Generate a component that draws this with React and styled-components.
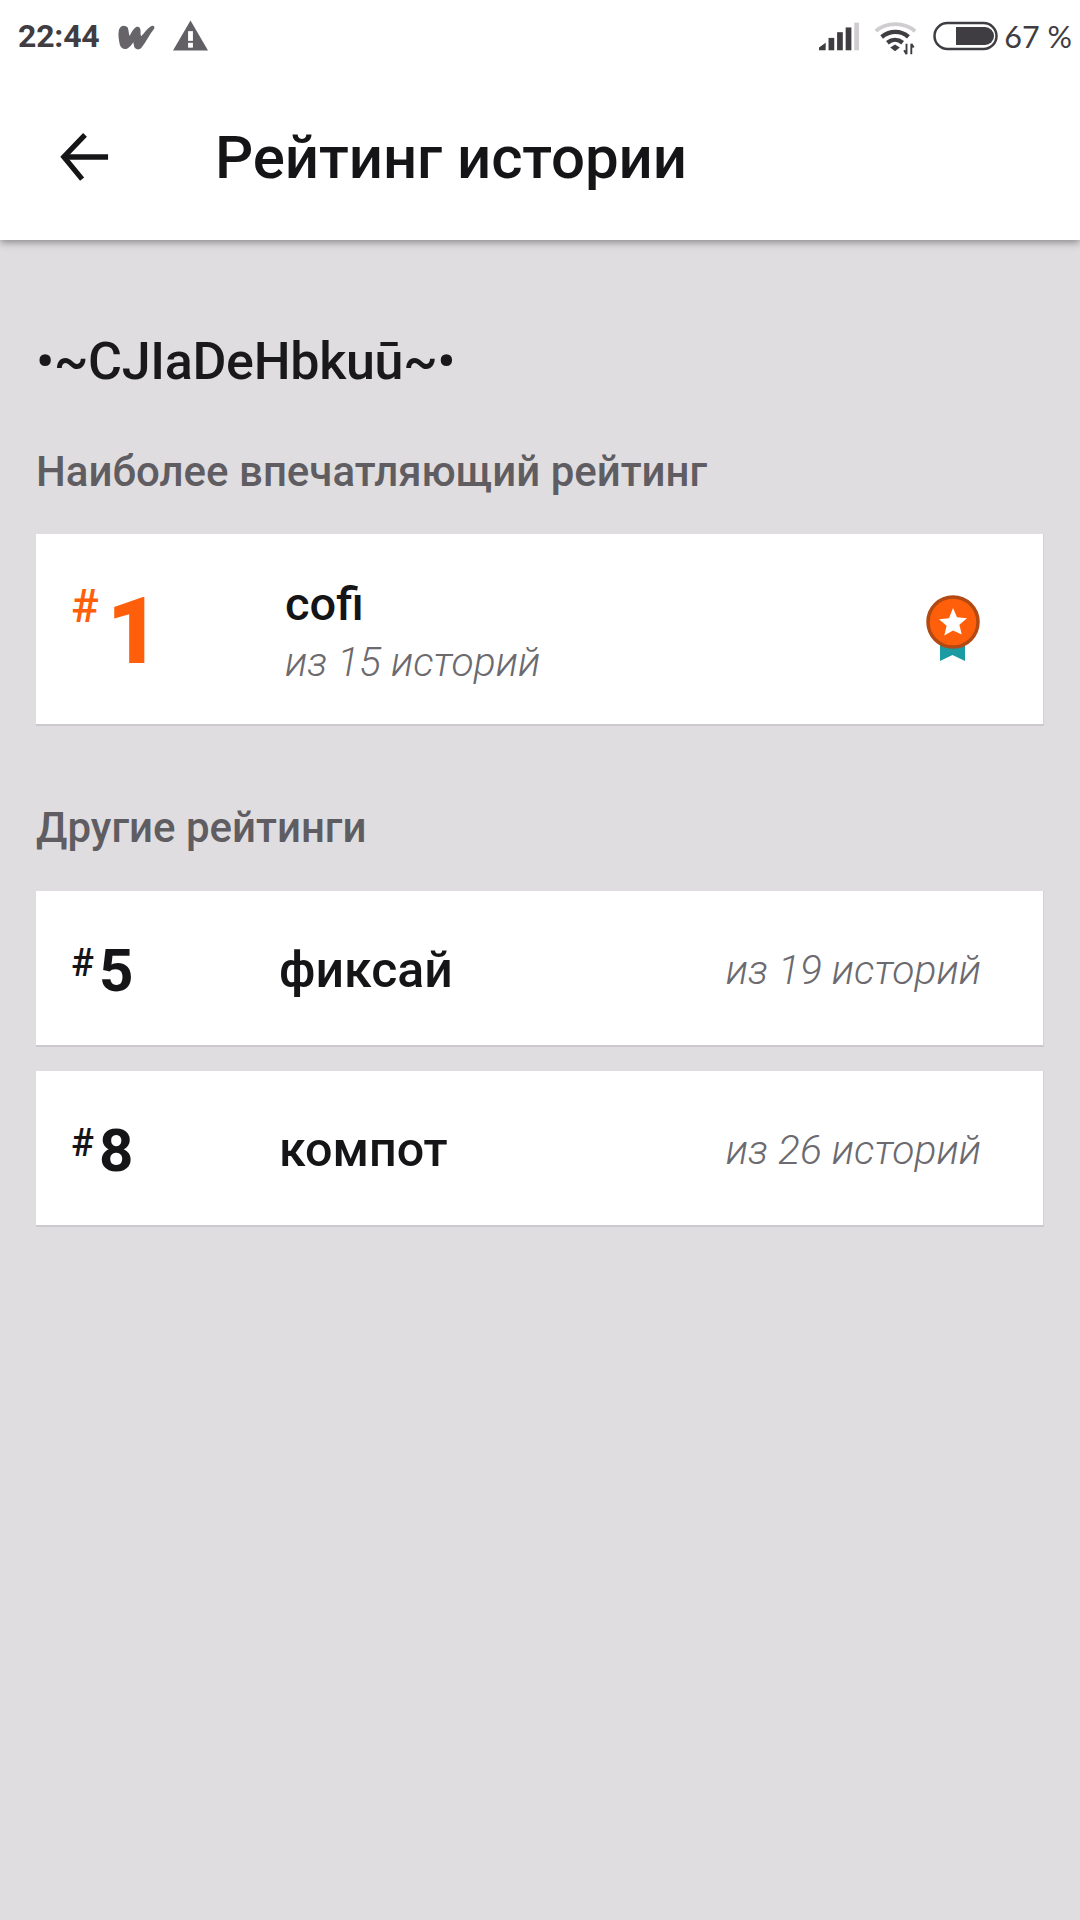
import React from "react";
import styled, { createGlobalStyle } from "styled-components";

const Global = createGlobalStyle`
  html, body { margin: 0; padding: 0; background: #dfdde0; }
  body { font-family: Roboto, "Noto Sans", sans-serif; }
`;
const Page = styled.div`
  width: 1080px; height: 1920px; background: #dfdde0; display: flex; flex-direction: column; overflow: hidden;
`;
const Top = styled.header`
  height: 240px; background: #fff; box-shadow: 0 2px 8px rgba(0,0,0,.42); display: flex; flex-direction: column; flex: none; position: relative;
`;
const StatusBar = styled.div`
  height: 72px; display: flex; align-items: center; justify-content: space-between; padding: 0 8px 0 18px; color: #3f3d41;
`;
const StatusGroup = styled.div`
  display: flex; align-items: center; gap: ${p => p.$gap || 16}px;
`;
const Clock = styled.span`
  font-size: 32px; font-weight: 700; letter-spacing: -0.2px;
`;
const Battery = styled.span`
  font-size: 30.5px; font-weight: 400; font-family: Lato, Roboto, sans-serif; margin-left: -10px;
`;
const AppBar = styled.div`
  flex: 1; display: flex; align-items: center; padding: 2px 0 0 60px; gap: 105px;
`;
const Title = styled.h1`
  margin: 0; font-size: 60px; font-weight: 500; color: #151416; letter-spacing: -0.1px;
`;
const Content = styled.main`
  padding: 0 36px; display: flex; flex-direction: column;
`;
const Name = styled.div`
  font-size: 52px; font-weight: 500; color: #19181a; margin-top: 94px; line-height: 56px; letter-spacing: -0.3px;
`;
const Section = styled.h2`
  margin: ${p => p.$top}px 0 0; font-size: 42px; line-height: 48px; font-weight: 500; color: #5f5d61;
`;
const Card = styled.div`
  background: #fff; border-bottom: 2px solid #cbc9cd; border-right: 1px solid #d2d0d4; margin-top: ${p => p.$top}px; height: ${p => p.$h}px; display: flex; align-items: center; position: relative;
`;
const Rank = styled.div`
  width: ${p => p.$width}px; padding: ${p => p.$pad}px 0 0 35px; box-sizing: border-box; display: flex; align-items: flex-start; color: ${p => p.$color}; flex: none;
`;
const Hash = styled.span`
  font-size: ${p => p.$size}px; font-weight: 500; line-height: 1; margin-right: ${p => p.$gap}px; margin-top: ${p => p.$top}px;
`;
const Num = styled.span`
  font-size: ${p => p.$size}px; font-weight: ${p => p.$weight}; line-height: 1;
`;
const Stack = styled.div`
  display: flex; flex-direction: column; flex: 1; padding-top: ${p => p.$pad}px;
`;
const ItemName = styled.div`
  font-size: ${p => p.$size}px; font-weight: 500; color: #151416; line-height: 52px;
`;
const Sub = styled.div`
  font-size: 40.8px; font-weight: 300; font-style: italic; color: #6c6a6e; line-height: 48px; margin-top: ${p => p.$top || 0}px; margin-right: ${p => p.$right || 0}px;
`;
const Medal = styled.svg`
  margin: 0 63px 3px 0; flex: none;
`;

const Wattpad = () => (
  <svg width="38" height="30" viewBox="0 0 42 30">
    <path d="M2 9C3 3 9 2 12 6c1 3 1 7 2 9 2-4 4-8 7-10 3-1 5 1 5 4 0 3 0 6 1 6 3-3 6-8 11-11 3-1 4 1 3 3-5 6-9 15-14 21-3 3-7 2-8-1l-1-5c-2 3-4 6-7 7-4 1-7-1-8-5C2 19 1 14 2 9z" fill="#666468" />
  </svg>
);
const Warn = () => (
  <svg width="35" height="32" viewBox="0 0 36 32">
    <path d="M18 0 36 31H0Z" fill="#626064" />
    <rect x="15.5" y="11" width="5" height="10" fill="#fff" />
    <rect x="15.5" y="23" width="5" height="5" fill="#fff" />
  </svg>
);
const Signal = () => (
  <svg width="40" height="30" viewBox="0 0 42 30">
    <path d="M0 27l7-5v8H0z" fill="#3f3d41" />
    <rect x="10" y="17" width="6" height="13" fill="#3f3d41" />
    <rect x="19" y="11" width="6" height="19" fill="#3f3d41" />
    <rect x="28" y="6" width="6" height="24" fill="#3f3d41" />
    <rect x="37" y="1" width="5" height="29" fill="#cfcdd0" />
  </svg>
);
const Wifi = () => (
  <svg width="44" height="34" viewBox="0 -3 46 34" fill="none" overflow="visible">
    <path d="M2 9C12-1 32-1 43 9" stroke="#cfcdd0" strokeWidth="4" />
    <path d="M8 15c9-7 20-7 28 0" stroke="#3f3d41" strokeWidth="4.5" />
    <path d="M14 21c5-4 11-4 16 0" stroke="#3f3d41" strokeWidth="4.5" />
    <path d="M17 26l5-3 5 3-5 4z" fill="#3f3d41" />
    <path d="M34 22v11M34 33l-2.500-4M39 33V22M39 22l2.500 4" stroke="#3f3d41" strokeWidth="2" />
  </svg>
);
const BatteryIcon = () => (
  <svg width="66" height="30" viewBox="0 0 66 30">
    <rect x="1.500" y="2" width="62" height="26" rx="13" fill="none" stroke="#3f3d41" strokeWidth="2.500" />
    <path d="M23 6h29a9 9 0 0 1 0 18H23z" fill="#3f3d41" />
  </svg>
);
const Back = () => (
  <svg width="50" height="50" viewBox="0 0 52 50" fill="none" stroke="#151416" strokeWidth="5.500">
    <path d="M50 25H4" />
    <path d="M26 2 4 25l19 23" />
  </svg>
);
const MedalIcon = () => (
  <Medal width="54" height="66" viewBox="0 0 54 66">
    <path d="M14 40h25v26l-12.500-6L14 66z" fill="#1b9ba2" />
    <circle cx="27" cy="27" r="25" fill="#ff5f0a" stroke="#b34a14" strokeWidth="3.500" />
    <path d="M27 13l4 9.300 10 .9-7.600 6.600 2.300 9.800L27 35.400l-8.700 5.200 2.300-9.800-7.600-6.600 10-.9z" fill="#fff" />
  </Medal>
);

export default function App() {
  return (
    <Page>
      <Global />
      <Top>
        <StatusBar>
          <StatusGroup $gap={18}>
            <Clock>22:44</Clock>
            <Wattpad />
            <Warn />
          </StatusGroup>
          <StatusGroup $gap={15}>
            <Signal />
            <Wifi />
            <BatteryIcon />
            <Battery>67 %</Battery>
          </StatusGroup>
        </StatusBar>
        <AppBar>
          <Back />
          <Title>Рейтинг истории</Title>
        </AppBar>
      </Top>
      <Content>
        <Name>•~CJIaDeHbkuū~•</Name>
        <Section $top={58}>Наиболее впечатляющий рейтинг</Section>
        <Card $top={38} $h={190}>
          <Rank $color="#ff5f0a" $width={249} $pad={6}>
            <Hash $size={46} $gap={8} $top={-3}>#</Hash>
            <Num $size={92} $weight={900}>1</Num>
          </Rank>
          <Stack $pad={6}>
            <ItemName $size={47}>cofi</ItemName>
            <Sub $top={8}>из 15 историй</Sub>
          </Stack>
          <MedalIcon />
        </Card>
        <Section $top={78}>Другие рейтинги</Section>
        <Card $top={39} $h={154}>
          <Rank $color="#151416" $width={243} $pad={5}>
            <Hash $size={38} $gap={5} $top={3}>#</Hash>
            <Num $size={60} $weight={700}>5</Num>
          </Rank>
          <Stack $pad={3}>
            <ItemName $size={50}>фиксай</ItemName>
          </Stack>
          <Sub $right={62} $top={3}>из 19 историй</Sub>
        </Card>
        <Card $top={24} $h={154}>
          <Rank $color="#151416" $width={243} $pad={5}>
            <Hash $size={38} $gap={5} $top={3}>#</Hash>
            <Num $size={60} $weight={700}>8</Num>
          </Rank>
          <Stack $pad={3}>
            <ItemName $size={48.5}>компот</ItemName>
          </Stack>
          <Sub $right={62} $top={3}>из 26 историй</Sub>
        </Card>
      </Content>
    </Page>
  );
}
